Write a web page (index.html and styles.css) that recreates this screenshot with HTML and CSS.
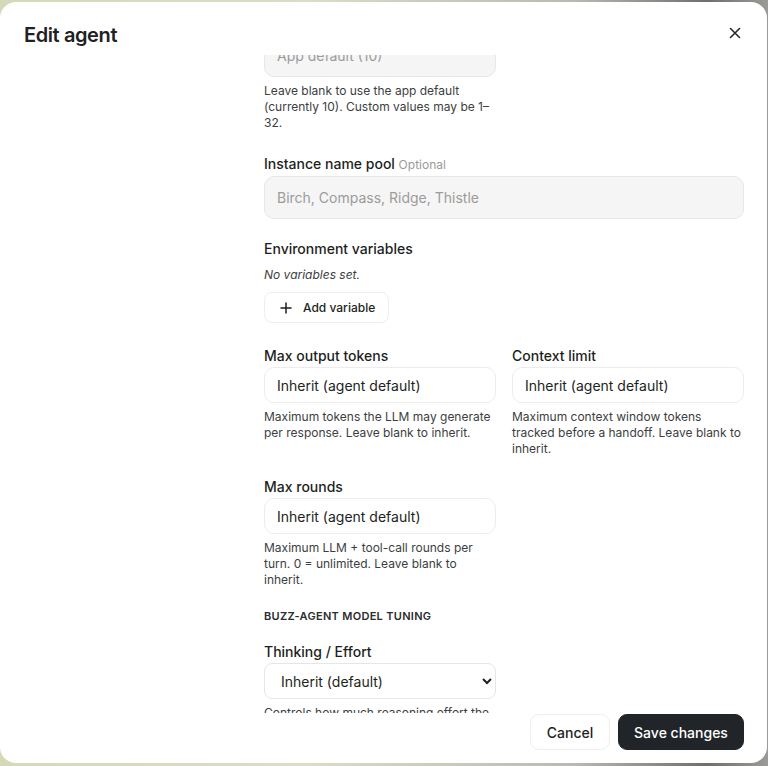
FILE: index.html
```html
<!DOCTYPE html>
<html lang="en">
<head>
<meta charset="utf-8">
<title>Edit agent</title>
<link rel="stylesheet" href="styles.css">
</head>
<body>
<div class="modal" role="dialog" aria-labelledby="modal-title">
  <header class="modal-header">
    <h2 id="modal-title" class="modal-title">Edit agent</h2>
    <button class="close-btn" type="button" aria-label="Close">
      <svg width="14" height="14" viewBox="0 0 14 14" fill="none" stroke="currentColor" stroke-width="1.6" stroke-linecap="round"><path d="M2.5 2.5l9 9M11.5 2.5l-9 9"/></svg>
    </button>
  </header>
  <div class="modal-body">
    <aside class="side"></aside>
    <div class="form scrolled">
      <div class="grid-2">
        <div class="field">
          <input class="input input-muted" type="text" placeholder="App default (10)">
          <p class="help">Leave blank to use the app default (currently 10). Custom values may be 1–32.</p>
        </div>
      </div>

      <div class="field field-spaced">
        <label class="label">Instance name pool <span class="optional">Optional</span></label>
        <input class="input input-muted" type="text" placeholder="Birch, Compass, Ridge, Thistle">
      </div>

      <div class="field">
        <label class="label">Environment variables</label>
        <p class="empty-note">No variables set.</p>
        <button class="btn-outline" type="button">
          <svg width="14" height="14" viewBox="0 0 14 14" fill="none" stroke="currentColor" stroke-width="1.5" stroke-linecap="round"><path d="M7 2v10M2 7h10"/></svg>
          Add variable
        </button>
      </div>

      <div class="grid-2 field-spaced">
        <div class="field">
          <label class="label">Max output tokens</label>
          <input class="input" type="text" value="Inherit (agent default)">
          <p class="help">Maximum tokens the LLM may generate per response. Leave blank to inherit.</p>
        </div>
        <div class="field">
          <label class="label">Context limit</label>
          <input class="input" type="text" value="Inherit (agent default)">
          <p class="help">Maximum context window tokens tracked before a handoff. Leave blank to inherit.</p>
        </div>
      </div>

      <div class="grid-2">
        <div class="field">
          <label class="label">Max rounds</label>
          <input class="input" type="text" value="Inherit (agent default)">
          <p class="help">Maximum LLM + tool-call rounds per turn. 0 = unlimited. Leave blank to inherit.</p>
        </div>
      </div>

      <h3 class="section-title">BUZZ-AGENT MODEL TUNING</h3>

      <div class="grid-2">
        <div class="field">
          <label class="label">Thinking / Effort</label>
          <select class="select">
            <option>Inherit (default)</option>
          </select>
          <p class="help">Controls how much reasoning effort the model spends before answering.</p>
        </div>
      </div>
    </div>
  </div>
  <footer class="modal-footer">
    <button class="btn btn-secondary" type="button">Cancel</button>
    <button class="btn btn-primary" type="button">Save changes</button>
  </footer>
</div>
</body>
</html>
```
FILE: styles.css
```css
* { box-sizing: border-box; }

html, body {
  margin: 0;
  height: 100%;
}

body {
  overflow: hidden;
  background: linear-gradient(90deg, #d6d9b8 0%, #dcdcc8 40%, #b9b9b2 75%, #6f6f6c 92%, #9a9a96 100%);
  font-family: Inter, "Noto Sans", "Liberation Sans", sans-serif;
  color: #1d1f21;
  padding-top: 2px;
}

.modal {
  width: 767px;
  height: 761px;
  background: #ffffff;
  border-radius: 16px;
  display: flex;
  flex-direction: column;
  overflow: hidden;
}

.modal-header {
  flex: none;
  height: 53px;
  padding: 19px 20px 6px 24px;
  display: flex;
  align-items: center;
  justify-content: space-between;
}

.modal-title {
  margin: 0;
  font-size: 20px;
  line-height: 28px;
  font-weight: 600;
  letter-spacing: -0.4px;
  color: #1f2123;
}

.close-btn {
  width: 24px;
  height: 24px;
  border: 0;
  background: transparent;
  color: #26282a;
  padding: 0;
  display: flex;
  align-items: center;
  justify-content: center;
  margin-top: -4px;
}

.modal-body {
  flex: 1;
  min-height: 0;
  overflow: hidden;
  display: grid;
  grid-template-columns: 216px 480px;
  column-gap: 24px;
  padding: 0 23px 0 24px;
}

.form {
  display: flex;
  flex-direction: column;
  gap: 20px;
}

.form.scrolled {
  margin-top: -21px;
}

.grid-2 {
  display: grid;
  grid-template-columns: 232px 232px;
  column-gap: 16px;
}

.field {
  display: flex;
  flex-direction: column;
}

.field-spaced {
  margin-top: 3px;
}

.label {
  display: block;
  font-size: 14px;
  line-height: 20px;
  font-weight: 500;
  color: #1d1f21;
  margin-bottom: 1px;
}

.optional {
  font-size: 12px;
  font-weight: 400;
  color: #9a9a9a;
}

.input {
  display: block;
  width: 100%;
  height: 36px;
  padding: 0 12px;
  border: 1px solid #ececec;
  border-radius: 10px;
  background: #ffffff;
  font-family: inherit;
  font-size: 14px;
  color: #1d1f21;
  outline: none;
}

.input-muted {
  height: 43px;
  background: #f5f5f5;
  border-color: #e7e7e7;
}

.input::placeholder {
  color: #9b9b9b;
}

.select {
  display: block;
  width: 100%;
  height: 36px;
  padding: 0 6px 0 12px;
  border: 1px solid #e6e6e6;
  border-radius: 8px;
  background: #ffffff;
  font-family: inherit;
  font-size: 14px;
  color: #1d1f21;
  outline: none;
}

.help {
  margin: 6px 0 0;
  font-size: 12px;
  line-height: 16px;
  color: #3c3e40;
}

.empty-note {
  margin: 7px 0 9px;
  font-size: 12px;
  line-height: 16px;
  font-style: italic;
  color: #3c3e40;
}

.btn-outline {
  align-self: flex-start;
  display: inline-flex;
  align-items: center;
  gap: 10px;
  height: 31px;
  padding: 0 13px 0 14px;
  border: 1px solid #eeeeee;
  border-radius: 8px;
  background: #ffffff;
  font-family: inherit;
  font-size: 12px;
  font-weight: 500;
  color: #1d1f21;
}

.section-title {
  margin: 0 0 -2px;
  font-size: 11px;
  line-height: 16px;
  font-weight: 600;
  letter-spacing: 0.3px;
  color: #2a2c2e;
}

.modal-footer {
  flex: none;
  height: 50px;
  display: flex;
  justify-content: flex-end;
  align-items: flex-start;
  gap: 8px;
  padding: 1px 23px 0 24px;
}

.btn {
  height: 36px;
  border-radius: 9px;
  font-family: inherit;
  font-size: 14px;
  font-weight: 500;
  padding: 0;
  white-space: nowrap;
}

.btn-secondary {
  width: 80px;
  background: #ffffff;
  border: 1px solid #efefef;
  color: #1d1f21;
}

.btn-primary {
  width: 126px;
  background: #212428;
  border: 1px solid #212428;
  color: #ffffff;
}
```
